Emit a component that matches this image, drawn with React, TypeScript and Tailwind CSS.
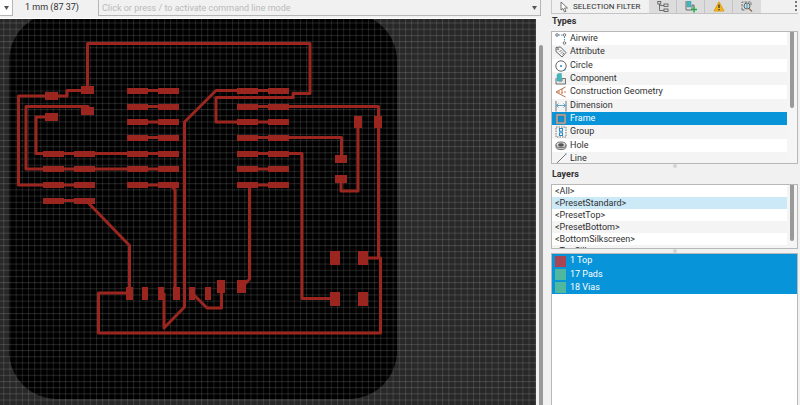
import type { ReactNode } from "react";

const padRow = (x: number, ys: number[]) =>
  ys.flatMap((y) => [
    [x, y, 21, 6],
    [x + 31, y, 21, 6],
  ]);

const pads: number[][] = [
  ...padRow(127, [88, 104, 119, 135, 151, 166, 182]),
  ...padRow(237, [88, 104, 119, 135, 151, 166, 182]),
  ...padRow(43, [151, 166, 182, 198]),
  [45, 92, 13, 8], [81, 86, 13, 8], [81, 107, 13, 8], [45, 113, 13, 8],
  [354, 116, 8, 12], [374, 116, 8, 12], [335, 155, 12, 8], [335, 175, 12, 8],
  [330, 251, 10, 14], [358, 251, 10, 14], [330, 292, 10, 14], [358, 292, 10, 14],
  [126, 287, 7, 13], [142, 287, 6, 13], [158, 287, 6, 13], [173, 287, 7, 13],
  [189, 287, 6, 13], [205, 287, 6, 13], [217, 280, 8, 13], [237, 280, 9, 13],
];

const traces = [
  "M87.5 90V43.5H310V93.5H293V97.5H216V122H248",
  "M43 185H18.5V96H67V90.5H88",
  "M43 169H26V106.5H88V110",
  "M43 153.5H36V117H52",
  "M58 153.5H168", "M58 169H168", "M58 185H84", "M58 200.5H86L129.5 245.5V293H98.5V333H380.5V258H363",
  "M138 90.5H169", "M138 106.5H169", "M138 122H169", "M138 137.5H169", "M138 185H171L175 190V293",
  "M278 90.5H216L184.5 122V307L164 328V293",
  "M248 106.5H378.5V258", "M248 122H278", "M248 137.5H341.5V159",
  "M248 153.5H302V298.5H335", "M248 169H278", "M248 185H278",
  "M249.5 185V279L242 287", "M341 179V191H358V122",
  "M192 293L207 308H221.5V287",
];

function Board() {
  return (
    <svg className="block" width="1600" height="1200" viewBox="0 19 1600 1200" role="img" aria-label="Circuit board layout">
      <defs>
        <pattern id="grid" x="3.3" y="4" width="6.18" height="6.18" patternUnits="userSpaceOnUse">
          <path d="M.5 0V6.18" stroke="#fff" strokeOpacity=".12" />
          <path d="M0 .5H6.18" stroke="#fff" strokeOpacity=".14" />
        </pattern>
      </defs>
      <rect y="18" width="1600" height="1200" fill="#282828" />
      <rect x="9" y="13" width="388" height="386" rx="48" fill="#000" />
      <rect y="18" width="1600" height="1200" fill="url(#grid)" />
      <g fill="none" stroke="#9a261f" strokeWidth="3" strokeLinejoin="round">
        {traces.map((d) => <path key={d} d={d} />)}
      </g>
      <g fill="#9a261f">
        {pads.map(([x, y, w, h]) => <rect key={`${x}-${y}`} x={x} y={y} width={w} height={h} />)}
      </g>
    </svg>
  );
}

function Icon({ children }: { children: ReactNode }) {
  return (
    <svg className="size-3 shrink-0" viewBox="0 0 12 12" fill="none" stroke="#555" aria-hidden="true">
      {children}
    </svg>
  );
}

const types: { name: string; icon: ReactNode }[] = [
  { name: "Airwire", icon: <><circle cx="2" cy="2" r="1.3" strokeWidth=".8" /><circle cx="9.5" cy="2" r="1.3" strokeWidth=".8" /><circle cx="9.5" cy="10" r="1.3" strokeWidth=".8" /><path d="M3.5 2H8M9.5 3.5V8.5" stroke="#3d91c9" strokeDasharray="1.5 1" /></> },
  { name: "Attribute", icon: <><path d="M1 1.5 5.5 1 11 6.5 7 11 1 5.5Z" strokeWidth=".9" /><circle cx="3" cy="3.2" r=".7" strokeWidth=".7" /><path d="m4.5 6 2-2M6 7.5l2-2M7.5 8.5 9 7" strokeWidth=".8" /></> },
  { name: "Circle", icon: <><circle cx="6" cy="6" r="5.2" strokeWidth=".9" /><circle cx="6" cy="6" r="1" fill="#2788c8" stroke="none" /><circle cx="9.7" cy="9.7" r=".9" fill="#2788c8" stroke="none" /></> },
  { name: "Component", icon: <><path d="M1 5V11H10.5V5.5H7V8H4" fill="#ddd" fillOpacity=".6" strokeWidth=".8" /><path d="M2 1.5 3.5.5H6.5V7L5 8H2Z" fill="#42b5bd" stroke="#42a0aa" strokeWidth=".5" /></> },
  { name: "Construction Geometry", icon: <><path d="M10.5 1 1 6l9.5 5" stroke="#a76543" strokeWidth=".9" /><path d="M3 6H11M7 3V9" stroke="#d76c38" strokeDasharray="2 1" /></> },
  { name: "Dimension", icon: <><path d="M1 1V11.5M11 1V11.5" strokeWidth=".8" /><path d="M1.5 5.5H10.5M3.5 3.5l-2 2 2 2M8.5 3.5l2 2-2 2" stroke="#3d91c9" strokeWidth=".8" /></> },
  { name: "Frame", icon: <><rect x="2" y="2" width="8" height="8" stroke="#b3a9a5" strokeWidth="2" /><rect x="1" y="1" width="10" height="10" stroke="#777" strokeWidth=".5" /><rect x="3" y="3" width="6" height="6" stroke="#666" strokeWidth=".5" /></> },
  { name: "Group", icon: <><rect x="1" y="1" width="10" height="10" strokeWidth=".8" strokeDasharray="1.5 1" /><rect x="4.5" y="2.5" width="3" height="2.7" stroke="#2788c8" /><rect x="4.5" y="6.8" width="3" height="2.7" stroke="#2788c8" /></> },
  { name: "Hole", icon: <><path d="M1 4.5V7C1 10.5 11 10.5 11 7V4.5" fill="#ccc" strokeWidth=".8" /><ellipse cx="6" cy="4.8" rx="5" ry="2.8" fill="#ddd" strokeWidth=".8" /><ellipse cx="6" cy="5" rx="2.7" ry="1.4" fill="#555" strokeWidth=".5" /></> },
  { name: "Line", icon: <><path d="M1 11 11 1" strokeWidth=".8" /><path d="M.5 11.5h1M10.5.8h1" stroke="#2788c8" /></> },
];

const presets = ["<All>", "<PresetStandard>", "<PresetTop>", "<PresetBottom>", "<BottomSilkscreen>", "<TopSilkscreen>"];

const layers = [
  { name: "1 Top", color: "bg-[#a94452]" },
  { name: "17 Pads", color: "bg-[#50b89e]" },
  { name: "18 Vias", color: "bg-[#50b89e]" },
];

function Splitter() {
  return <div className="flex h-1 items-center justify-center"><span className="size-1 rounded-full bg-[#d2d2d2]" /></div>;
}

function Arrow() {
  return <svg className="h-1 w-[5px]" viewBox="0 0 5 4" fill="#555" aria-hidden="true"><path d="M0 0H5L2.5 4Z" /></svg>;
}

export default function App() {
  return (
    <div className="flex h-screen overflow-hidden bg-[#f1f1f1] font-['Roboto','Liberation_Sans',sans-serif] text-[9px] text-[#303030]">
      <main className="flex min-w-0 flex-1 flex-col">
        <header className="mr-0.5 flex h-[19px] shrink-0 items-start border-b border-white">
          <button aria-label="Grid units" className="flex h-4 w-[13px] items-center justify-center border-r border-b border-[#b5b5b5] bg-white"><Arrow /></button>
          <span className="w-[85px] pl-3 leading-[15px]">1 mm (87 37)</span>
          <div className="flex h-4 min-w-0 flex-1 items-center border border-t-0 border-[#b5b5b5] pr-[3px]">
            <input aria-label="Command line" placeholder="Click or press / to activate command line mode" className="h-full min-w-0 flex-1 bg-transparent pl-[3px] outline-none placeholder:text-[#bababa]" />
            <button aria-label="Command history"><Arrow /></button>
          </div>
        </header>
        <div className="flex min-h-0 flex-1">
          <div className="min-w-0 flex-1 overflow-hidden"><Board /></div>
          <div className="flex w-[7px] justify-end pt-[26px]"><div className="w-1 rounded-t-sm bg-[#999]" /></div>
        </div>
      </main>

      <aside className="ml-2 flex w-[249px] shrink-0 flex-col pr-0.5">
        <div role="tablist" className="flex h-[14px] shrink-0 border-b border-[#c4c4c4]">
          <button role="tab" aria-selected="true" className="flex w-[98px] shrink-0 items-center gap-[5px] border-l border-[#c9c9c9] pl-2 text-[8px] whitespace-nowrap">
            <svg className="h-3 w-2 shrink-0" viewBox="0 0 8 12" fill="#fff" stroke="#555" strokeWidth=".8"><path d="M1 1V9L3 7.5 4.5 11 6 10.3 4.6 7H7.5Z" /></svg>
            SELECTION FILTER
          </button>
          <button role="tab" aria-label="Design tree" className="flex w-7 items-center justify-center border-r border-[#c4c4c4] bg-[#dcdcdc]">
            <Icon><path d="M2.5 3V9.5H7M2.5 4.5H7" strokeWidth=".8" /><rect x=".8" y=".5" width="3" height="2.5" strokeWidth=".8" /><rect x="7" y="3" width="4" height="2.5" strokeWidth=".8" /><rect x="7" y="8" width="4" height="2.5" strokeWidth=".8" /></Icon>
          </button>
          <button role="tab" aria-label="Add component" className="flex w-7 items-center justify-center border-r border-[#c4c4c4] bg-[#dcdcdc]">
            <Icon><path d="M2 0H6V6H2Z" fill="#42b5bd" stroke="#42a0aa" strokeWidth=".5" /><path d="M1 0V9H7V4H9V6" strokeWidth=".8" /><path d="M9 5.5V11.5M6 8.5H12" stroke="#23a84f" strokeWidth="1.5" /></Icon>
          </button>
          <button role="tab" aria-label="Warnings" className="flex w-7 items-center justify-center border-r border-[#c4c4c4] bg-[#dcdcdc]">
            <Icon><path d="M6 .8 11 10H1Z" fill="#f2b51d" stroke="#dea018" strokeLinejoin="round" /><path d="M6 3.5V7M6 8V9.3" stroke="#333" strokeWidth="1.3" /></Icon>
          </button>
          <button role="tab" aria-label="Inspect" className="flex w-7 items-center justify-center bg-[#dcdcdc]">
            <Icon><path d="M1 9V1H10V4M1 9H4" strokeWidth=".8" strokeDasharray="2.500 1" /><circle cx="6" cy="5" r="3" fill="#d3edf1" strokeWidth=".9" /><path d="m8 7.5 3 3" stroke="#916b4b" strokeWidth="1.3" /><path d="M4.5 4H7.5M4.5 6H7.5M6 3V7" stroke="#4996ad" strokeWidth=".7" /></Icon>
          </button>
          <button aria-label="Panel menu" className="ml-auto flex w-1 flex-col items-center gap-0.5 pt-px"><i className="size-0.5 bg-[#777]" /><i className="size-0.5 bg-[#777]" /><i className="size-0.5 bg-[#777]" /></button>
        </div>

        <h2 className="h-[17px] shrink-0 pl-px leading-[14px] font-bold">Types</h2>
        <div className="flex h-[133px] shrink-0 overflow-hidden border border-[#b8b8b8] bg-[#f5f5f5]">
          <ul role="listbox" aria-label="Types" className="min-w-0 flex-1">
            {types.map(({ name, icon }, i) => (
              <li key={name} role="option" aria-selected={name === "Frame"} className={`flex items-center gap-[3px] pl-[3px] ${i % 3 === 1 ? "h-[14px]" : "h-[13px]"} ${name === "Frame" ? "bg-[#0894d8] text-white" : i % 2 ? "bg-[#f4f4f4]" : "bg-white"}`}>
                <Icon>{icon}</Icon>{name}
              </li>
            ))}
          </ul>
          <div className="w-[10px] pl-[3px]"><div className="h-[76px] w-1 rounded-b-sm bg-[#999]" /></div>
        </div>
        <Splitter />

        <h2 className="h-4 shrink-0 pl-px leading-[13px] font-bold">Layers</h2>
        <div className="flex h-[65px] shrink-0 overflow-hidden border border-[#b8b8b8] bg-[#f5f5f5]">
          <ul role="listbox" aria-label="Layer presets" className="min-w-0 flex-1">
            {presets.map((name, i) => (
              <li key={name} role="option" aria-selected={i === 1} className={`h-3 pl-[3px] leading-3 ${i === 1 ? "bg-[#cbe9f7]" : i % 2 ? "bg-[#f4f4f4]" : "bg-white"}`}>{name}</li>
            ))}
          </ul>
          <div className="w-[10px] pl-[3px]"><div className="h-[56px] w-1 rounded-b-sm bg-[#999]" /></div>
        </div>
        <Splitter />
        <ul role="listbox" aria-label="Layers" aria-multiselectable="true" className="min-h-0 flex-1 border border-b-0 border-[#b8b8b8] bg-white">
          {layers.map(({ name, color }, i) => (
            <li key={name} role="option" aria-selected="true" className={`flex items-center gap-1 bg-[#0894d8] pl-[3px] text-white ${i === 0 ? "h-[14px]" : "h-[13px]"}`}>
              <span className={`size-[11px] ${color}`} />{name}
            </li>
          ))}
        </ul>
      </aside>
    </div>
  );
}
